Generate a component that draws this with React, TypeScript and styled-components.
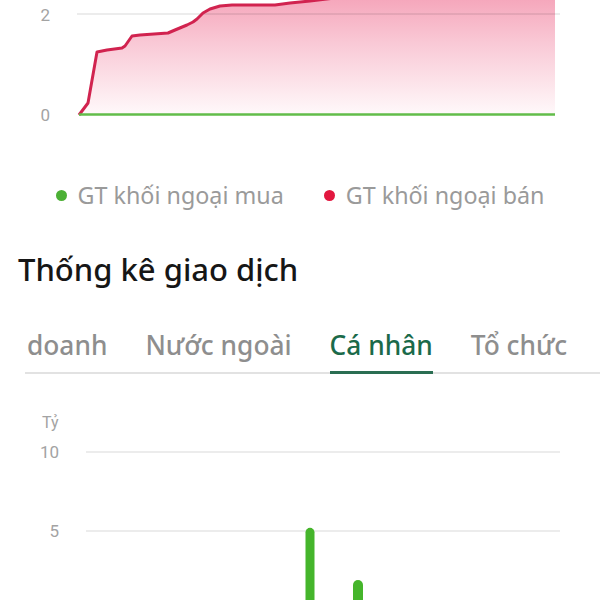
import React from "react";
import styled, { createGlobalStyle } from "styled-components";

const GlobalStyle = createGlobalStyle`
  html, body {
    margin: 0;
    padding: 0;
    background: #fff;
    overflow: hidden;
  }
  body {
    font-family: "Noto Sans", "Open Sans", "Liberation Sans", sans-serif;
  }
`;

const Page = styled.div`
  width: 600px;
  height: 600px;
  overflow: hidden;
  background: #fff;
  display: flex;
  flex-direction: column;
`;

const ChartSvg = styled.svg<{ $gap?: number }>`
  display: block;
  flex-shrink: 0;
  margin-top: ${(p) => p.$gap ?? 0}px;
  font-family: Roboto, "Liberation Sans", sans-serif;
`;

const Legend = styled.div`
  display: flex;
  justify-content: center;
  gap: 40px;
  margin-top: 50px;
`;

const LegendItem = styled.div`
  display: flex;
  align-items: center;
  gap: 11px;
  font-size: 23.3px;
  line-height: 30px;
  color: #9a9a9a;
`;

const Dot = styled.span<{ $color: string }>`
  width: 11px;
  height: 11px;
  border-radius: 50%;
  background: ${(p) => p.$color};
`;

const Title = styled.h2`
  margin: 41px 0 0 18px;
  font-size: 31px;
  line-height: 36px;
  font-weight: 500;
  color: #161616;
`;

const TabBar = styled.div`
  display: flex;
  gap: 38px;
  margin: 41px 0 0 25px;
  padding-left: 2px;
  border-bottom: 2px solid #e2e2e2;
  white-space: nowrap;
`;

const Tab = styled.div<{ $active?: boolean }>`
  font-size: 26.3px;
  line-height: 34px;
  font-weight: 500;
  padding: 0 0 9px;
  margin-bottom: -2px;
  color: ${(p) => (p.$active ? "#1b6a4a" : "#8e8e8e")};
  border-bottom: 3px solid ${(p) => (p.$active ? "#2a6e52" : "transparent")};
`;

const redLine: [number, number][] = [
  [79, 115], [88, 103], [97, 52], [107, 50], [122, 48], [125, 46], [132, 36],
  [140, 35], [168, 33], [175, 30], [187, 25], [193, 22], [197, 19], [203, 13],
  [210, 9], [220, 6], [232, 5], [275, 5], [290, 3], [310, 1], [335, -2],
  [360, -6], [420, -10], [490, -14], [555, -18],
];

const TopChart = () => {
  const line = redLine.map(([x, y]) => `${x},${y}`).join(" ");
  const area = `M79,115 L${line.split(" ").join(" L")} L555,-60 L555,115 Z`;
  return (
    <ChartSvg width={600} height={130} viewBox="0 0 600 130">
      <defs>
        <linearGradient id="sellFill" x1="0" y1="-20" x2="0" y2="118" gradientUnits="userSpaceOnUse">
          <stop offset="0" stopColor="#f498b0" />
          <stop offset="0.45" stopColor="#f9c8d5" />
          <stop offset="1" stopColor="#fffbfc" />
        </linearGradient>
      </defs>
      <path d={area} fill="url(#sellFill)" />
      <line x1={77} y1={14} x2={560} y2={14} stroke="#000" strokeOpacity={0.1} strokeWidth={1.5} />
      <text x={50} y={21} textAnchor="end" fontSize={17} fill="#a3a3a3">2</text>
      <text x={50} y={121} textAnchor="end" fontSize={17} fill="#a3a3a3">0</text>
      <polyline points={line} fill="none" stroke="#d1234f" strokeWidth={3} strokeLinejoin="round" />
      <line x1={79} y1={114.5} x2={555} y2={114.5} stroke="#62bd4a" strokeWidth={2.5} />
    </ChartSvg>
  );
};

const bars = [
  { x: 310, value: 5.2, width: 9 },
  { x: 358, value: 1.9, width: 10 },
];

const BottomChart = () => {
  const zeroY = 220;
  const unit = 15.8;
  return (
    <ChartSvg $gap={16} width={600} height={240} viewBox="0 0 600 240">
      <text x={42} y={38} fontSize={16} fill="#a3a3a3">Tỷ</text>
      {[10, 5, 0].map((v) => (
        <g key={v}>
          <line x1={86} y1={zeroY - v * unit} x2={560} y2={zeroY - v * unit} stroke="#e6e6e6" strokeWidth={1.5} />
          <text x={59} y={zeroY - v * unit + 6} textAnchor="end" fontSize={17} fill="#a3a3a3">{v}</text>
        </g>
      ))}
      {bars.map((b) => (
        <rect
          key={b.x}
          x={b.x - b.width / 2}
          y={zeroY - b.value * unit}
          width={b.width}
          height={b.value * unit + 20}
          rx={b.width / 2}
          fill="#45b52b"
        />
      ))}
    </ChartSvg>
  );
};

export default function App() {
  return (
    <Page>
      <GlobalStyle />
      <TopChart />
      <Legend>
        <LegendItem>
          <Dot $color="#4cb035" />
          GT khối ngoại mua
        </LegendItem>
        <LegendItem>
          <Dot $color="#e2173f" />
          GT khối ngoại bán
        </LegendItem>
      </Legend>
      <Title>Thống kê giao dịch</Title>
      <TabBar>
        <Tab>doanh</Tab>
        <Tab>Nước ngoài</Tab>
        <Tab $active>Cá nhân</Tab>
        <Tab>Tổ chức</Tab>
      </TabBar>
      <BottomChart />
    </Page>
  );
}
